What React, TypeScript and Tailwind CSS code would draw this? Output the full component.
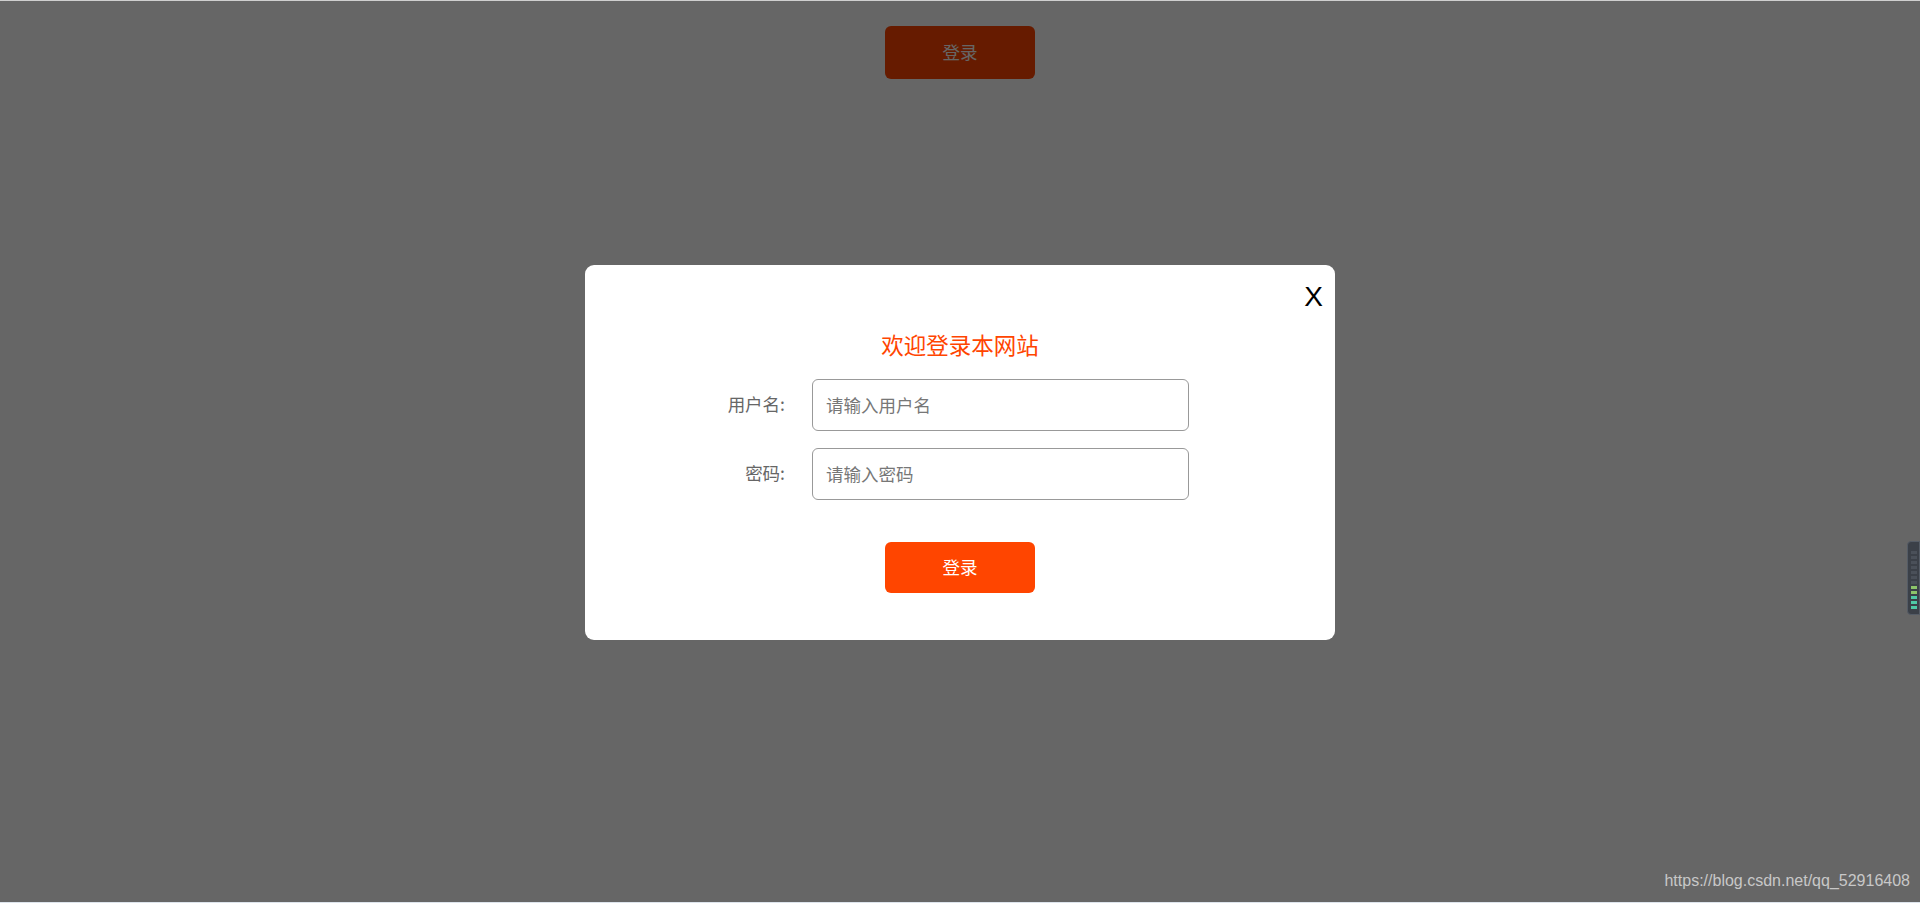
import React from 'react';

const font = { fontFamily: '"Noto Sans CJK SC", "Liberation Sans", sans-serif' };

interface FieldProps {
  label: string;
  placeholder: string;
  type?: string;
}

const Field = ({ label, placeholder, type = 'text' }: FieldProps) => {
  return (
    <div className="flex items-center ml-[120px]">
      <label className="w-[80px] text-right text-[17.5px] text-[#666] mr-[27px]">
        {label}
      </label>
      <input
        type={type}
        placeholder={placeholder}
        className="w-[377px] h-[52px] border border-[#999] rounded-[6px] px-[13px] text-[17.5px] text-[#333] placeholder:text-[#777] outline-none"
        style={font}
      />
    </div>
  );
};

// 右端のスクロールバーみたいなやつ
const SideWidget = () => {
  const bars = Array.from({ length: 12 });
  return (
    <div className="absolute right-0 top-[541px] w-[13px] h-[74px] rounded-l-[4px] bg-[#3b4048] border border-[#555c66] flex flex-col items-center justify-end gap-[2px] pb-[5px] pt-[6px]">
      {bars.map((_, i) => (
        <div
          key={i}
          className={
            i < 7
              ? 'w-[6px] h-[3px] bg-[#4a5059]'
              : i < 9
              ? 'w-[6px] h-[3px] bg-[#8cc46a]'
              : 'w-[6px] h-[3px] bg-[#4fc9a6]'
          }
        />
      ))}
    </div>
  );
};

const App = () => {
  return (
    <div
      className="relative w-full h-[903px] overflow-hidden bg-white"
      style={font}
    >
      <div className="flex justify-center pt-[26px]">
        <button className="w-[150px] h-[53px] rounded-[6px] bg-[#ff4500] text-white text-[17.5px]">
          登录
        </button>
      </div>

      {/* 黒いオーバーレイ */}
      <div className="absolute inset-0 bg-black/60 flex items-center justify-center border-t border-[#cfcfcf]">
        <div className="relative w-[750px] h-[375px] bg-white rounded-[9px] flex flex-col">
          <span
            className="absolute top-[18px] right-[12px] text-[28px] leading-[28px] text-black cursor-pointer"
            style={{ fontFamily: '"Liberation Sans", Arial, sans-serif' }}
          >
            X
          </span>
          <h2 className="mt-[64px] text-center text-[22.5px] leading-[30px] text-[#ff4500] font-normal">
            欢迎登录本网站
          </h2>
          <div className="mt-[20px] flex flex-col gap-[17px]">
            <Field label="用户名:" placeholder="请输入用户名" />
            <Field label="密码:" placeholder="请输入密码" type="password" />
          </div>
          <div className="flex justify-center mt-[42px]">
            <button className="w-[150px] h-[51px] rounded-[6px] bg-[#ff4500] text-white text-[17.5px]">
              登录
            </button>
          </div>
        </div>
      </div>

      <SideWidget />

      <div
        className="absolute right-[10px] bottom-[10px] text-[16px] text-[#c8c8c8]"
        style={{ fontFamily: '"Liberation Sans", Arial, sans-serif' }}
      >
        https://blog.csdn.net/qq_52916408
      </div>
      <div className="absolute left-0 right-0 bottom-0 h-px bg-[#dde4ec]" />
    </div>
  );
};

export default App;
